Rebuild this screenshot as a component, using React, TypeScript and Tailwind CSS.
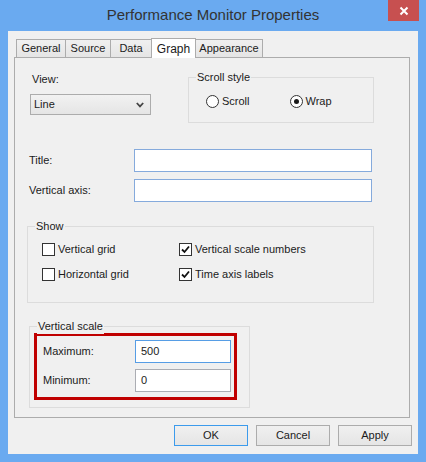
import React from "react";

function Group({ label, className, children }: { label: string; className: string; children: React.ReactNode }) {
  return (
    <div className={`relative border border-[#dcdcdc] ${className}`}>
      <span className="absolute -top-[8px] left-[7px] bg-[#f0f0f0] px-[1px] leading-[15px]">{label}</span>
      {children}
    </div>
  );
}

function Radio({ label, checked }: { label: string; checked?: boolean }) {
  return (
    <div className="flex w-[85px] items-center">
      <span className="flex h-[13px] w-[13px] items-center justify-center rounded-full border border-[#333] bg-white">
        {checked && <span className="h-[5px] w-[5px] rounded-full bg-[#1a1a1a]" />}
      </span>
      <span className="ml-[3px] leading-[15px]">{label}</span>
    </div>
  );
}

function Check({ label, checked, className }: { label: string; checked?: boolean; className?: string }) {
  return (
    <div className={`flex h-[15px] items-center ${className ?? ""}`}>
      <span className="flex h-[13px] w-[13px] items-center justify-center border border-[#333] bg-white">
        {checked && (
          <svg width="9" height="9" viewBox="0 0 9 9">
            <path d="M1 4.5 L3.5 7 L8 1.5" fill="none" stroke="#111" strokeWidth="1.8" />
          </svg>
        )}
      </span>
      <span className="ml-[3px] leading-[15px]">{label}</span>
    </div>
  );
}

const tabs = [
  { label: "General", w: "w-[49px]" },
  { label: "Source", w: "w-[45px]" },
  { label: "Data", w: "w-[41px]" },
];

export default function App() {
  return (
    <div className="flex h-[462px] w-[426px] flex-col bg-[#6aaaf0] font-['Liberation_Sans',Arial,sans-serif] text-[11px] text-[#1b1b1b]">
      {/* title bar */}
      <div className="relative flex h-[31px] items-center justify-center">
        <span className="text-[15px] text-[#333]">Performance Monitor Properties</span>
        <div className="absolute right-[7px] top-0 flex h-[21px] w-[31px] items-center justify-center bg-[#c75050]">
          <svg width="10" height="10" viewBox="0 0 10 10">
            <path d="M1.5 1.5 L8.5 8.5 M8.5 1.5 L1.5 8.5" stroke="#fff" strokeWidth="2" />
          </svg>
        </div>
      </div>

      {/* client */}
      <div className="mx-[8px] flex h-[423px] w-[410px] flex-col bg-[#f0f0f0]">
        {/* tabs */}
        <div className="ml-[8px] mt-[7px] flex h-[19px] items-end">
          {tabs.map((t) => (
            <div
              key={t.label}
              className={`flex h-[18px] ${t.w} items-center justify-center border-l border-t border-[#acacac] bg-gradient-to-b from-[#f0f0f0] to-[#e5e5e5]`}
            >
              {t.label}
            </div>
          ))}
          <div className="relative z-10 -mb-px flex h-[20px] w-[45px] items-start justify-center border-x border-t border-[#acacac] bg-white pt-[1px] text-[12px]">
            Graph
          </div>
          <div className="flex h-[18px] w-[67px] items-center justify-center border-r border-t border-[#acacac] bg-gradient-to-b from-[#f0f0f0] to-[#e5e5e5]">
            Appearance
          </div>
        </div>

        {/* panel */}
        <div className="ml-[6px] flex h-[361px] w-[396px] flex-col border border-[#acacac] bg-[#f0f0f0]">
          {/* view + scroll style */}
          <div className="flex pl-[15px]">
            <div className="flex flex-col">
              <span className="ml-[2px] mt-[13px] leading-[16px]">View:</span>
              <div className="mt-[7px] flex h-[21px] w-[121px] items-center justify-between border border-[#acacac] bg-gradient-to-b from-[#f2f2f2] to-[#e5e5e5] pl-[3px] pr-[6px]">
                <span>Line</span>
                <svg width="8" height="6" viewBox="0 0 8 6">
                  <path d="M0.8 1 L4 4.4 L7.2 1" fill="none" stroke="#444" strokeWidth="1.8" />
                </svg>
              </div>
            </div>
            <Group label="Scroll style" className="ml-[37px] mt-[19px] h-[46px] w-[186px]">
              <div className="flex pl-[17px] pt-[16px]">
                <Radio label="Scroll" />
                <Radio label="Wrap" checked />
              </div>
            </Group>
          </div>

          {/* title / vertical axis */}
          <div className="mt-[26px] flex items-center pl-[14px]">
            <span className="w-[105px]">Title:</span>
            <div className="h-[23px] w-[238px] border border-[#85aadc] bg-white" />
          </div>
          <div className="mt-[7px] flex items-center pl-[14px]">
            <span className="w-[105px]">Vertical axis:</span>
            <div className="h-[23px] w-[238px] border border-[#85aadc] bg-white" />
          </div>

          {/* show */}
          <Group label="Show" className="ml-[12px] mt-[24px] h-[77px] w-[347px]">
            <div className="grid grid-cols-[137px_1fr] gap-y-[10px] pl-[14px] pt-[15px]">
              <Check label="Vertical grid" />
              <Check label="Vertical scale numbers" checked />
              <Check label="Horizontal grid" />
              <Check label="Time axis labels" checked />
            </div>
          </Group>

          {/* vertical scale */}
          <Group label="Vertical scale" className="ml-[14px] mt-[23px] h-[82px] w-[221px]">
            <div className="ml-[4px] mt-[6px] h-[67px] w-[203px] border-[3px] border-[#c00000] pl-[6px] pt-[4px]">
              <div className="flex items-center">
                <span className="w-[92px]">Maximum:</span>
                <div className="flex h-[23px] w-[96px] items-center border border-[#569de5] bg-white pl-[5px]">500</div>
              </div>
              <div className="mt-[6px] flex items-center">
                <span className="w-[92px]">Minimum:</span>
                <div className="flex h-[23px] w-[96px] items-center border border-[#abadb3] bg-white pl-[5px]">0</div>
              </div>
            </div>
          </Group>
        </div>

        {/* buttons */}
        <div className="mt-[7px] flex justify-end gap-[8px] pr-[6px]">
          <button className="h-[21px] w-[74px] border border-[#3c9bec] bg-gradient-to-b from-[#f0f0f0] to-[#e5e5e5]">OK</button>
          <button className="h-[21px] w-[74px] border border-[#acacac] bg-gradient-to-b from-[#f0f0f0] to-[#e5e5e5]">Cancel</button>
          <button className="h-[21px] w-[74px] border border-[#acacac] bg-gradient-to-b from-[#f0f0f0] to-[#e5e5e5]">Apply</button>
        </div>
      </div>
    </div>
  );
}
